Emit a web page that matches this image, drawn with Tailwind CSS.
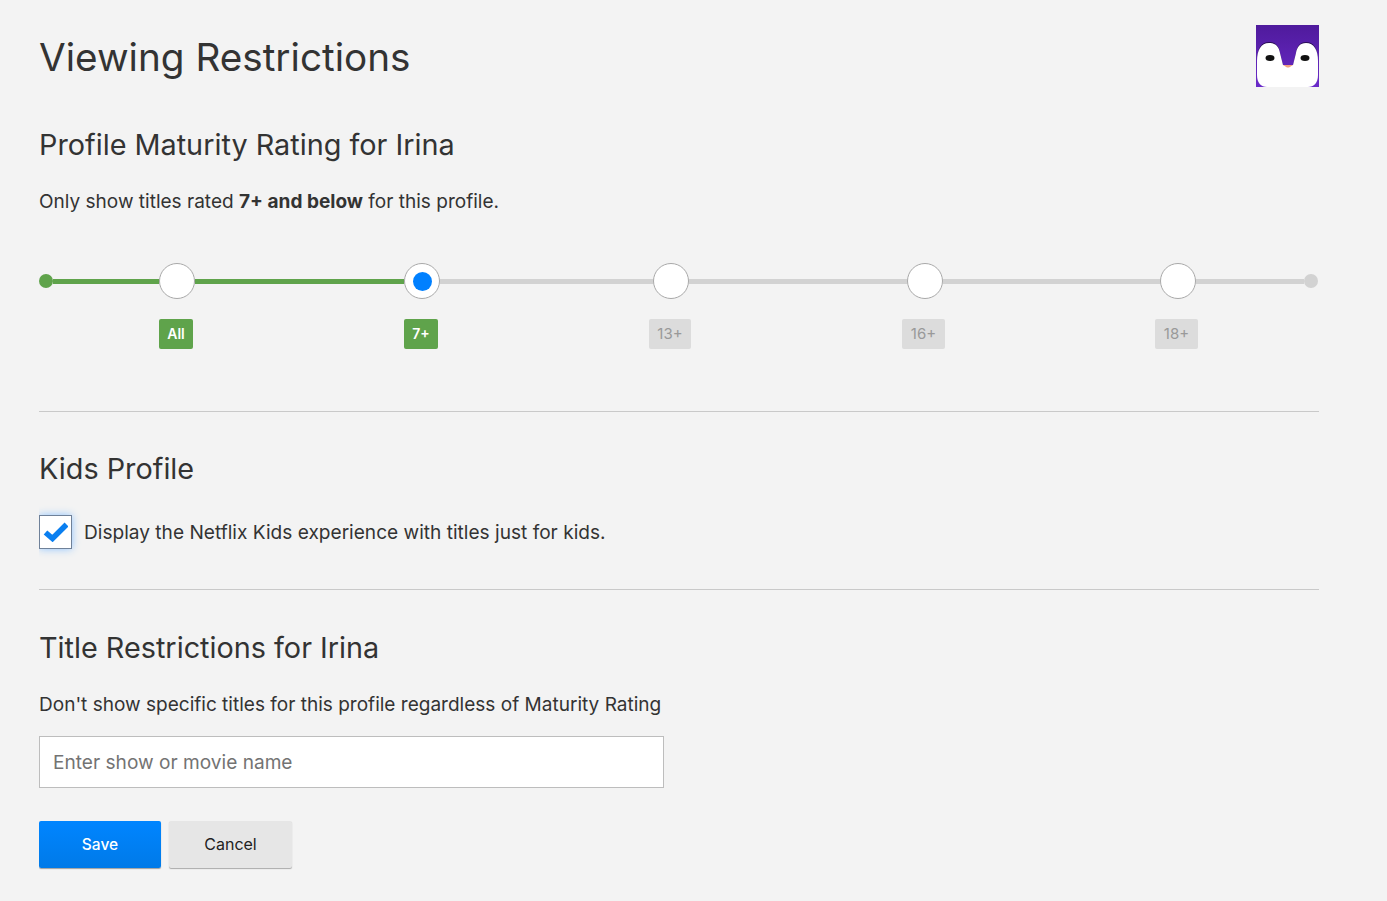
<!DOCTYPE html>
<html lang="en">
<head>
  <meta charset="UTF-8">
  <meta name="viewport" content="width=device-width, initial-scale=1.0">
  <script src="https://cdn.jsdelivr.net/npm/@tailwindcss/browser@4"></script>
  <title>Viewing Restrictions</title>
</head>
<body class="bg-[#f3f3f3] font-['Inter',sans-serif] text-[#333]">
  <div class="w-[1280px] ml-[39px] h-[901px] overflow-hidden">

    <!-- Header -->
    <div class="flex justify-between items-start pt-[25px] h-[110px]">
      <h1 class="text-[38.700px] leading-[64px]">Viewing Restrictions</h1>
      <svg class="w-[63px] h-[62px]" viewBox="0 0 63 62">
        <defs>
          <linearGradient id="av" x1="0" y1="0" x2="0" y2="1">
            <stop offset="0" stop-color="#4f1a9c"/>
            <stop offset="1" stop-color="#6a2bc9"/>
          </linearGradient>
        </defs>
        <rect width="63" height="62" fill="url(#av)"/>
        <path d="M1 36C1 24 5 17 13 17C20 17 23 21 24 28L27 40H37L40 28C41 21 44 17 50 17C58 17 62 24 62 36V40H1Z" fill="#2a0f55"/>
        <path d="M1 36C1 25 5 18 13 18C20 18 23 22 24 28L27 40H37L40 28C41 22 44 18 50 18C58 18 62 25 62 36V50C62 58 58 62 52 62H11C5 62 1 58 1 50Z" fill="#fff"/>
        <path d="M27 40H37L33 42.500H31Z" fill="#f0a080"/>
        <ellipse cx="14" cy="33" rx="4.500" ry="3" fill="#111"/>
        <ellipse cx="49" cy="33" rx="4.500" ry="3" fill="#111"/>
      </svg>
    </div>

    <!-- Maturity rating -->
    <h2 class="text-[28.800px] leading-[36px] mt-[17px]">Profile Maturity Rating for Irina</h2>
    <p class="text-[19.050px] leading-[28px] mt-[25px]">Only show titles rated <b class="font-bold">7+ and below</b> for this profile.</p>

    <div class="mt-[47px] flex items-center h-[36px]">
      <div class="w-[14px] h-[14px] rounded-full bg-[#5fa34b]"></div>
      <div class="w-[106px] h-[5px] bg-[#5fa34b]"></div>
      <div class="w-[36px] h-[36px] rounded-full bg-white border border-[#a9a9a9]"></div>
      <div class="w-[209px] h-[5px] bg-[#5fa34b]"></div>
      <div class="w-[36px] h-[36px] rounded-full bg-white border border-[#a9a9a9] flex items-center justify-center">
        <div class="w-[19px] h-[19px] rounded-full bg-[#0080ff]"></div>
      </div>
      <div class="w-[213px] h-[5px] bg-[#d2d2d2]"></div>
      <div class="w-[36px] h-[36px] rounded-full bg-white border border-[#a9a9a9]"></div>
      <div class="w-[218px] h-[5px] bg-[#d2d2d2]"></div>
      <div class="w-[36px] h-[36px] rounded-full bg-white border border-[#a9a9a9]"></div>
      <div class="w-[217px] h-[5px] bg-[#d2d2d2]"></div>
      <div class="w-[36px] h-[36px] rounded-full bg-white border border-[#a9a9a9]"></div>
      <div class="w-[108px] h-[5px] bg-[#d2d2d2]"></div>
      <div class="w-[14px] h-[14px] rounded-full bg-[#d2d2d2]"></div>
    </div>

    <div class="mt-[20px] flex text-[14px] h-[30px]">
      <span class="ml-[120px] w-[34px] rounded-[2px] bg-[#5fa34b] text-white font-semibold flex items-center justify-center pb-[1px]">All</span>
      <span class="ml-[211px] w-[34px] rounded-[2px] bg-[#5fa34b] text-white font-semibold flex items-center justify-center pb-[1px]">7+</span>
      <span class="ml-[211px] w-[42px] rounded-[2px] bg-[#dcdcdc] text-[#999] text-[15px] flex items-center justify-center">13+</span>
      <span class="ml-[211px] w-[43px] rounded-[2px] bg-[#dcdcdc] text-[#999] text-[15px] flex items-center justify-center">16+</span>
      <span class="ml-[210px] w-[43px] rounded-[2px] bg-[#dcdcdc] text-[#999] text-[15px] flex items-center justify-center">18+</span>
    </div>

    <hr class="mt-[62px] border-[#c9c9c9]">

    <!-- Kids profile -->
    <h2 class="text-[28.800px] leading-[36px] mt-[39px]">Kids Profile</h2>
    <div class="mt-[28px] flex items-center gap-[12px]">
      <div class="w-[33px] h-[34px] bg-white border border-[#6f8199] shadow-[0_0_8px_#8fc4ff] flex items-center justify-center">
        <svg class="w-[25px] h-[20px]" viewBox="0 0 25 20">
          <path d="M2.500 10.500L9.500 16.500L23.500 2.500" fill="none" stroke="#0a7ff0" stroke-width="5.500"/>
        </svg>
      </div>
      <span class="text-[19.100px] leading-[34px]">Display the Netflix Kids experience with titles just for kids.</span>
    </div>

    <hr class="mt-[40px] border-[#c9c9c9]">

    <!-- Title restrictions -->
    <h2 class="text-[28.800px] leading-[36px] mt-[40px]">Title Restrictions for Irina</h2>
    <p class="text-[19.050px] leading-[28px] mt-[25px]">Don't show specific titles for this profile regardless of Maturity Rating</p>
    <input type="text" placeholder="Enter show or movie name" class="block mt-[17px] w-[625px] h-[52px] px-[13px] bg-white border border-[#bdbdbd] text-[19.100px] placeholder:text-[#737373]">

    <div class="mt-[33px] flex gap-[8px]">
      <button class="w-[122px] h-[47px] rounded-[2px] bg-gradient-to-b from-[#0085ff] to-[#007ae8] text-white text-[15.500px] font-medium shadow-[0_1px_1px_rgba(0,0,0,0.35)]">Save</button>
      <button class="w-[123px] h-[47px] pb-[2px] rounded-[2px] bg-[#e6e6e6] text-[#222] text-[16px] shadow-[0_1px_1px_rgba(0,0,0,0.3)]">Cancel</button>
    </div>
  </div>
</body>
</html>
